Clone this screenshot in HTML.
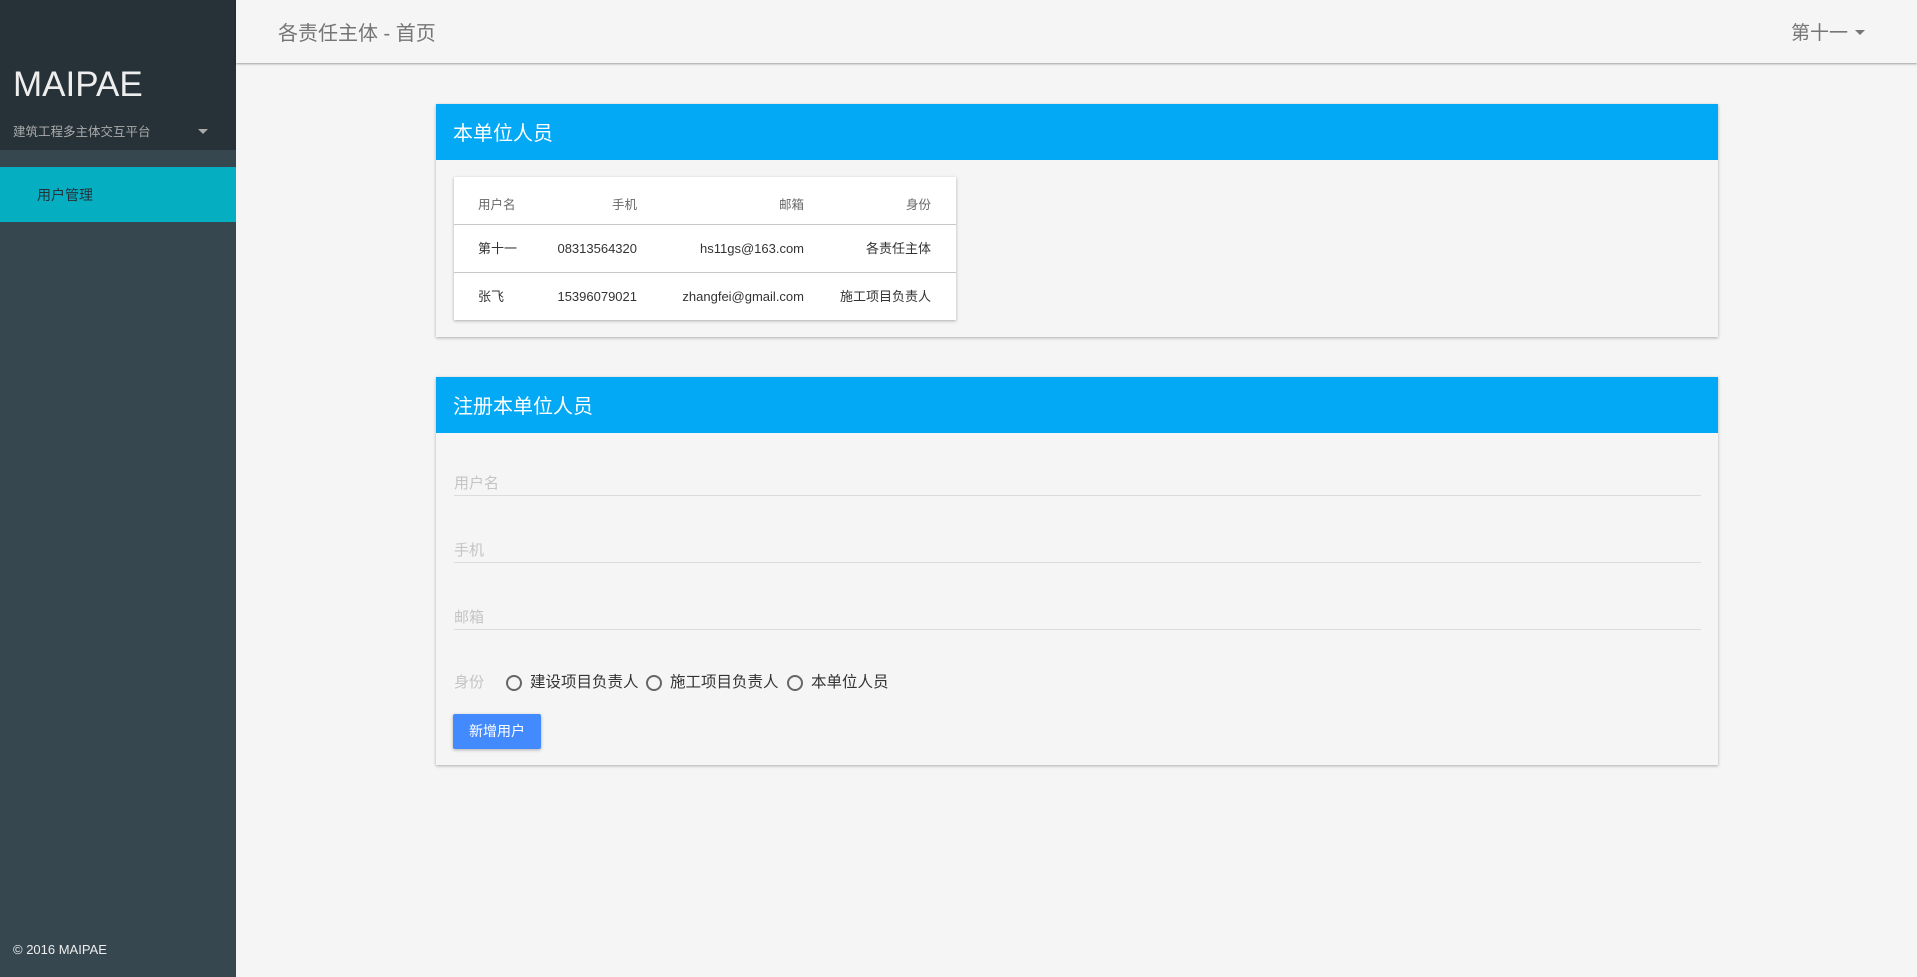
<!DOCTYPE html>
<html><head><meta charset="utf-8"><style>
*{margin:0;padding:0;box-sizing:border-box}
body{width:1917px;height:977px;overflow:hidden;background:#f5f5f5;font-family:"Liberation Sans","Noto Sans CJK SC",sans-serif;position:relative}
.abs{position:absolute}
#side{left:0;top:0;width:236px;height:977px;background:#37474f}
#side .top{left:0;top:0;width:236px;height:150px;background:#263238}
.logo{left:13px;top:65px;font-size:35px;line-height:40px;color:#eee}
.sub{left:13px;top:124px;font-size:12.5px;line-height:16px;color:#aaa}
.tri{width:0;height:0;border-left:5px solid transparent;border-right:5px solid transparent;border-top:5px solid #aaa}
.menu{left:0;top:167px;width:236px;height:55px;background:#06aec1}
.menu span{position:absolute;left:37px;top:19px;font-size:14px;line-height:18px;color:#263238}
.copy{left:13px;top:942px;font-size:13px;color:#eee}
#hdr{left:236px;top:0;width:1681px;height:63px;background:#f5f5f5;box-shadow:0 1px 2px rgba(0,0,0,.35)}
.ttl{left:278px;top:20px;font-size:20px;line-height:24px;color:#757575}
.card{left:436px;width:1282px;background:#f5f5f5;box-shadow:0 1px 3px rgba(0,0,0,.3)}
.ch{position:absolute;left:0;top:0;width:100%;height:56px;background:#03a9f4;color:#fff;font-size:20px;line-height:24px;padding:18px 0 0 17px}
.tbl{left:454px;top:177px;width:502px;height:143px;background:#fff;box-shadow:0 1px 3px rgba(0,0,0,.3)}
.tbl .ln{position:absolute;left:0;width:100%;height:1px;background:#c8c8c8}
.c{position:absolute;font-size:13px;line-height:16px;color:#333;white-space:nowrap}
.h{color:#666;font-size:12.5px}
.lbl{position:absolute;left:454px;font-size:15px;line-height:18px;color:#c4c4c4}
.ul{position:absolute;left:454px;width:1247px;height:1px;background:#dcdcdc}
.rad{position:absolute;top:675px;width:16px;height:16px;border:2px solid #666;border-radius:50%}
.rt{position:absolute;top:674px;font-size:15.5px;line-height:18px;color:#333}
.btn{left:453px;top:714px;width:88px;height:35px;background:#448aff;color:#fff;font-size:14px;text-align:center;line-height:35px;border-radius:2px;box-shadow:0 1px 3px rgba(0,0,0,.3)}
</style></head><body>
<div id="side" class="abs">
 <div class="top abs"></div>
 <div class="logo abs">MAIPAE</div>
 <div class="sub abs">建筑工程多主体交互平台</div>
 <div class="tri abs" style="left:198px;top:129px"></div>
 <div class="menu abs"><span>用户管理</span></div>
 <div class="copy abs">© 2016 MAIPAE</div>
</div>
<div id="hdr" class="abs"></div>
<div class="ttl abs" style="top:22px">各责任主体 - 首页</div>
<div class="abs" style="left:1791px;top:22px;font-size:19px;line-height:24px;color:#757575">第十一</div>
<div class="tri abs" style="left:1855px;top:30px;border-top-color:#757575"></div>

<div class="card abs" style="top:104px;height:233px"><div class="ch">本单位人员</div></div>
<div class="tbl abs">
 <div class="ln" style="top:47px"></div><div class="ln" style="top:95px"></div>
 <div class="c h" style="left:24px;top:20px">用户名</div>
 <div class="c h" style="right:319px;top:20px">手机</div>
 <div class="c h" style="right:152px;top:20px">邮箱</div>
 <div class="c h" style="right:25px;top:20px">身份</div>
 <div class="c" style="left:24px;top:64px">第十一</div>
 <div class="c" style="right:319px;top:64px">08313564320</div>
 <div class="c" style="right:152px;top:64px">hs11gs@163.com</div>
 <div class="c" style="right:25px;top:64px">各责任主体</div>
 <div class="c" style="left:24px;top:112px">张飞</div>
 <div class="c" style="right:319px;top:112px">15396079021</div>
 <div class="c" style="right:152px;top:112px">zhangfei@gmail.com</div>
 <div class="c" style="right:25px;top:112px">施工项目负责人</div>
</div>

<div class="card abs" style="top:377px;height:388px"><div class="ch">注册本单位人员</div></div>
<div class="lbl" style="top:475px">用户名</div><div class="ul" style="top:495px"></div>
<div class="lbl" style="top:542px">手机</div><div class="ul" style="top:562px"></div>
<div class="lbl" style="top:609px">邮箱</div><div class="ul" style="top:629px"></div>
<div class="lbl" style="top:674px">身份</div>
<div class="rad" style="left:506px"></div><div class="rt" style="left:530px">建设项目负责人</div>
<div class="rad" style="left:646px"></div><div class="rt" style="left:670px">施工项目负责人</div>
<div class="rad" style="left:787px"></div><div class="rt" style="left:811px">本单位人员</div>
<div class="btn abs">新增用户</div>
</body></html>
